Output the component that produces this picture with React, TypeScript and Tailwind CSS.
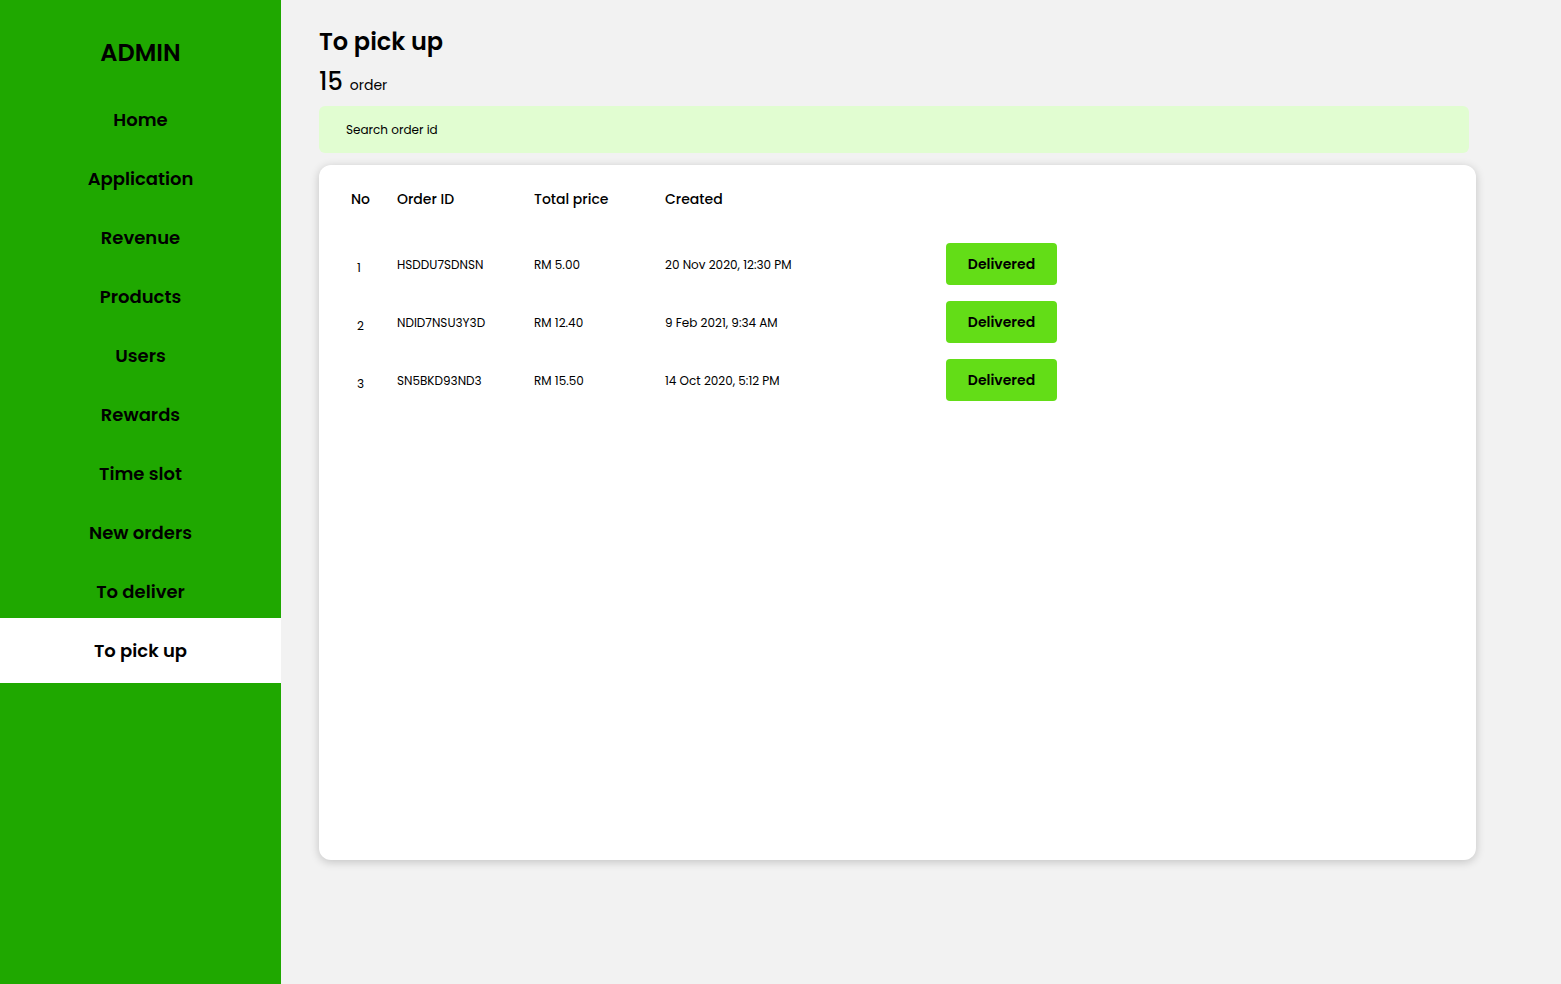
import React from "react";

const navItems = [
  "Home",
  "Application",
  "Revenue",
  "Products",
  "Users",
  "Rewards",
  "Time slot",
  "New orders",
  "To deliver",
  "To pick up",
];

const orders = [
  { no: 1, id: "HSDDU7SDNSN", price: "RM 5.00", created: "20 Nov 2020, 12:30 PM" },
  { no: 2, id: "NDID7NSU3Y3D", price: "RM 12.40", created: "9 Feb 2021, 9:34 AM" },
  { no: 3, id: "SN5BKD93ND3", price: "RM 15.50", created: "14 Oct 2020, 5:12 PM" },
];

const Sidebar = ({ active }: { active: string }) => (
  <aside className="w-[281px] shrink-0 bg-[#1fa800] min-h-screen flex flex-col">
    <div className="h-[90px] flex items-center justify-center pt-[16px] text-[24px] font-semibold text-black">
      ADMIN
    </div>
    <nav className="flex flex-col">
      {navItems.map((item) => (
        <div
          key={item}
          className={
            item === active
              ? "h-[65px] -my-[3px] flex items-center justify-center bg-white text-[18px] font-semibold text-black"
              : "h-[59px] flex items-center justify-center text-[18px] font-semibold text-black"
          }
        >
          {item}
        </div>
      ))}
    </nav>
  </aside>
);

export default function App() {
  return (
    <div
      className="flex min-h-screen bg-[#f2f2f2]"
      style={{ fontFamily: "Poppins, Inter, 'Noto Sans', sans-serif" }}
    >
      <Sidebar active="To pick up" />
      <main className="flex-1 pl-[38px] pr-[85px] pt-[24px]">
        <h1 className="text-[24px] font-semibold leading-[36px] text-black">To pick up</h1>
        <div className="flex items-baseline gap-[7px] mt-[6px] text-black">
          <span className="text-[24px] font-medium leading-[32px]">15</span>
          <span className="text-[14px]">order</span>
        </div>
        <div className="mt-[8px] mr-[7px] h-[47px] rounded-[6px] bg-[#e1fdd1] flex items-center px-[27px] text-[12px] text-black">
          Search order id
        </div>
        <div className="mt-[12px] h-[695px] rounded-[12px] bg-white shadow-[0_2px_10px_rgba(0,0,0,0.2)] pl-[32px] pt-[24px]">
          <div className="grid grid-cols-[46px_137px_131px_281px_111px] h-[20px] items-center text-[14px] font-medium text-black">
            <span>No</span>
            <span>Order ID</span>
            <span>Total price</span>
            <span>Created</span>
            <span></span>
          </div>
          <div className="flex flex-col gap-[16px] mt-[34px]">
            {orders.map((o) => (
              <div
                key={o.no}
                className="grid grid-cols-[46px_137px_131px_281px_111px] h-[42px] items-center text-[12px] text-black"
              >
                <span className="pl-[6px] pt-[7px]">{o.no}</span>
                <span className="pt-[1px]">{o.id}</span>
                <span className="pt-[1px]">{o.price}</span>
                <span className="pt-[1px]">{o.created}</span>
                <button className="h-[42px] w-[111px] rounded-[4px] bg-[#63dd17] text-[14px] font-semibold text-black">
                  Delivered
                </button>
              </div>
            ))}
          </div>
        </div>
      </main>
    </div>
  );
}
